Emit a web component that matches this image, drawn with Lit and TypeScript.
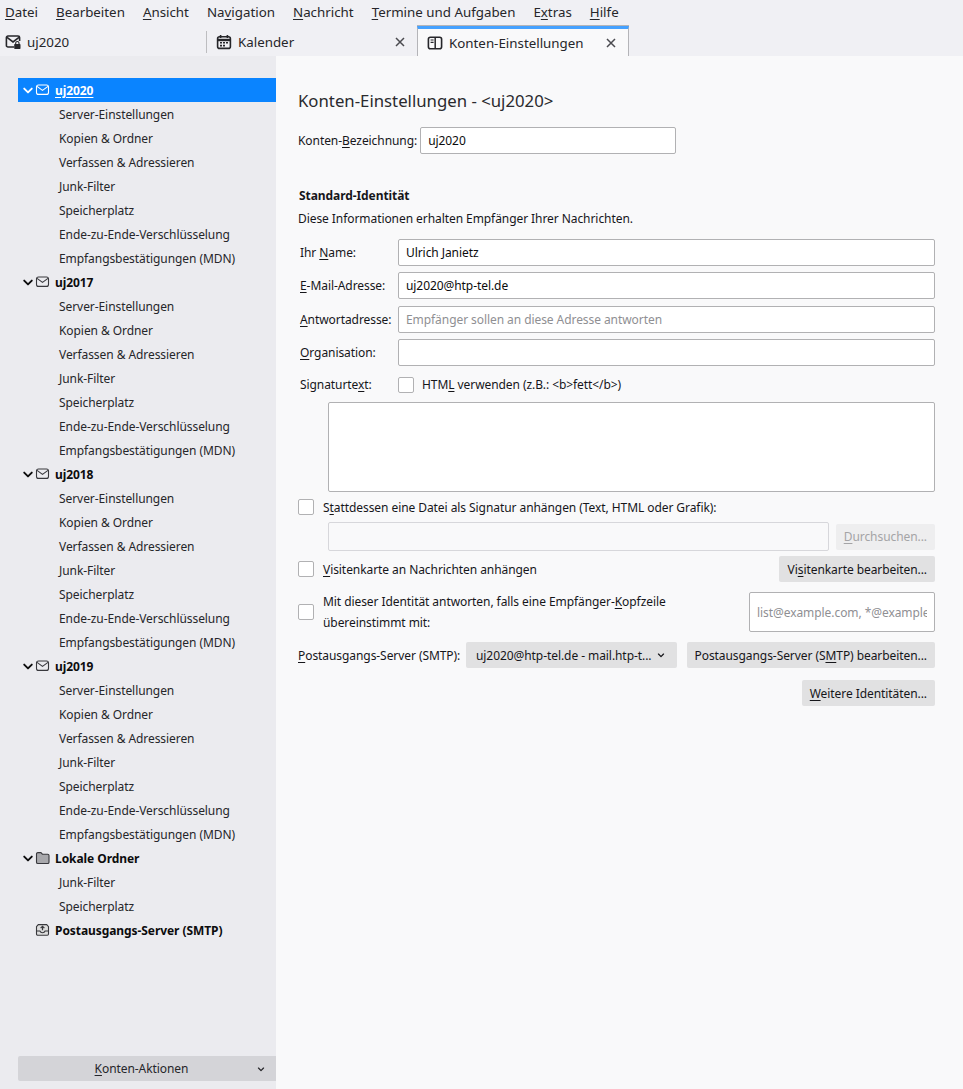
import { LitElement, html, css, svg } from "lit";
import { customElement } from "lit/decorators.js";

const u = (before: string, key: string, after: string) => html`${before}<u>${key}</u>${after}`;

const chevron = svg`<path d="M2.2 4.6 6 8.4l3.8-3.8" fill="none" stroke="currentColor" stroke-width="1.9" stroke-linecap="round" stroke-linejoin="round"/>`;
const mailIcon = svg`<rect x="1.5" y="3" width="12" height="9.4" rx="2" fill="none" stroke="currentColor" stroke-width="1.1"/><path d="M2 4.4 7.5 8.4 13 4.4" fill="none" stroke="currentColor" stroke-width="1.1"/>`;
const folderIcon = svg`<path d="M1.5 4c0-.8.6-1.4 1.4-1.4h3L7.4 4.2h5.3c.8 0 1.3.6 1.3 1.4v6.6c0 .8-.5 1.3-1.3 1.3H2.9c-.8 0-1.4-.5-1.4-1.3z" fill="#a8a8ac" stroke="#38383d" stroke-width="1.1"/>`;
const outboxIcon = svg`<path d="M1.5 4.6 3.3 2.6h8.4l1.8 2v7.4c0 .7-.5 1.2-1.2 1.2H2.7c-.7 0-1.2-.5-1.2-1.2z" fill="#ddd" stroke="#38383d" stroke-width="1.1"/><path d="M1.7 9h3.2c.4 1.1 1.4 1.8 2.6 1.8s2.2-.7 2.6-1.8h3.2" fill="none" stroke="#38383d" stroke-width="1.1"/><path d="M7.5 8.2V4.4M5.6 6.2l1.9-1.9 1.9 1.9" fill="none" stroke="#38383d" stroke-width="1.2"/>`;
const mailLock = svg`<path d="M9 13H3c-.9 0-1.6-.7-1.6-1.6V3.6C1.4 2.7 2.1 2 3 2h10c.9 0 1.6.7 1.6 1.6V7" fill="none" stroke="currentColor" stroke-width="1.6"/><path d="M2 3.4 8 8l6-4.6" fill="none" stroke="currentColor" stroke-width="1.6"/><rect x="9.2" y="10" width="6.3" height="5" rx=".7" fill="currentColor"/><path d="M10.7 10V8.9c0-1.9 3.3-1.9 3.3 0V10" fill="none" stroke="currentColor" stroke-width="1.1"/>`;
const calendarIcon = svg`<rect x="1.6" y="2.8" width="12.8" height="11.6" rx="2" fill="none" stroke="currentColor" stroke-width="1.6"/><path d="M1.8 6h12.4" stroke="currentColor" stroke-width="2.4"/><path d="M4.6 1v3M11.4 1v3" stroke="currentColor" stroke-width="1.6"/><path d="M4 8h2v1.6H4zM7 8h2v1.6H7zM10 8h2v1.6h-2zM4 10.8h2v1.6H4zM7 10.8h2v1.6H7z" fill="currentColor"/>`;
const accountIcon = svg`<rect x="1.4" y="2.2" width="13.2" height="11.6" rx="2" fill="none" stroke="currentColor" stroke-width="1.6"/><path d="M8.2 2.4v11.2" stroke="currentColor" stroke-width="1.5"/><path d="M3.6 5h3M3.6 7.4h3" stroke="currentColor" stroke-width="1.1"/>`;
const closeIcon = svg`<path d="M2 2l8 8M10 2l-8 8" stroke="currentColor" stroke-width="1.5" fill="none"/>`;

const fullChildren = [
  "Server-Einstellungen",
  "Kopien & Ordner",
  "Verfassen & Adressieren",
  "Junk-Filter",
  "Speicherplatz",
  "Ende-zu-Ende-Verschlüsselung",
  "Empfangsbestätigungen (MDN)",
];

const tree = [
  { name: "uj2020", icon: mailIcon, open: true, selected: true, children: fullChildren },
  { name: "uj2017", icon: mailIcon, open: true, children: fullChildren },
  { name: "uj2018", icon: mailIcon, open: true, children: fullChildren },
  { name: "uj2019", icon: mailIcon, open: true, children: fullChildren },
  { name: "Lokale Ordner", icon: folderIcon, open: true, children: ["Junk-Filter", "Speicherplatz"] },
  { name: "Postausgangs-Server (SMTP)", icon: outboxIcon, open: false, children: [] as string[] },
];

@customElement("app-root")
export class AppRoot extends LitElement {
  static styles = css`
    :host {
      display: flex;
      flex-direction: column;
      height: 1089px;
      overflow: hidden;
      font-family: "Noto Sans", sans-serif;
      font-size: 12px;
      letter-spacing: -0.07px;
      color: #0c0c0d;
      background: #f0f0f4;
    }
    svg { display: block; flex: none; }
    u { text-underline-offset: 2px; text-decoration-thickness: 1px; }

    .menubar {
      height: 26px;
      box-sizing: border-box;
      padding: 0 0 2px 5px;
      display: flex;
      align-items: center;
      gap: 18px;
      white-space: nowrap;
      color: #26262a;
      font-size: 13.33px;
      letter-spacing: 0;
    }
    .tabs { height: 30px; display: flex; color: #26262a; font-size: 13.33px; letter-spacing: 0; }
    .tab { display: flex; align-items: center; height: 30px; box-sizing: border-box; padding-top: 2px; }
    .tab1 { width: 206px; padding-left: 5px; gap: 6px; }
    .tab2 { width: 210px; padding-left: 9px; padding-right: 11px; gap: 6px; }
    .tab3 {
      width: 212px;
      padding-left: 9px;
      padding-right: 11px;
      gap: 6px;
      border: 1px solid #b4b4b8;
      border-bottom: none;
      border-top: 3px solid #45a1ff;
      background: #f9f9fa;
      box-shadow: 0 -1px 0 #b4b4b8;
      padding-top: 0;
    }
    .tab .title { flex: 1; }
    .sep { width: 1px; height: 22px; background: #bdbdc0; align-self: center; margin-top: 2px; }
    .close { color: #4a4a4f; }

    .main { flex: 1; display: flex; min-height: 0; }
    .side {
      width: 276px;
      flex: none;
      background: #ebebef;
      box-sizing: border-box;
      padding: 22px 0 8px 18px;
      display: flex;
      flex-direction: column;
    }
    .tree { flex: 1; }
    .row { height: 24px; display: flex; align-items: center; white-space: nowrap; }
    .account { font-weight: 700; padding-left: 4px; }
    .account .tw { width: 12px; margin-right: 1px; }
    .account .ic { margin-right: 4px; color: #38383d; }
    .account.selected { background: #0a84ff; color: #fff; }
    .account.selected .ic { color: #fff; }
    .account.selected .name { text-decoration: underline; text-underline-offset: 2px; }
    .child { padding-left: 41px; color: #26262a; }
    .actions {
      height: 25px;
      background: #d4d4d8;
      border-radius: 2px 0 0 2px;
      display: flex;
      align-items: center;
      padding-right: 11px;
      color: #26262a;
    }
    .actions .lbl { flex: 1; text-align: center; padding-left: 8px; }

    .pane {
      flex: 1;
      background: #f9f9fa;
      box-sizing: border-box;
      padding: 33px 28px 0 22px;
      color: #16161a;
    }
    h1 { font-size: 16.75px; font-weight: 400; margin: 0; line-height: 24px; color: #2a2a2e; letter-spacing: 0; }
    .namerow { display: flex; align-items: center; margin-top: 14px; gap: 3px; }
    input[type="text"], textarea {
      box-sizing: border-box;
      font: inherit;
      letter-spacing: inherit;
      color: #0c0c0d;
      background: #fff;
      border: 1px solid #b1b1b3;
      border-radius: 2px;
      padding: 0 7px;
      margin: 0;
      outline: none;
      display: block;
      resize: none;
    }
    input::placeholder, textarea::placeholder { color: #8f8f93; opacity: 1; }
    .namerow input { width: 256px; height: 27px; }
    .h2 { font-weight: 700; margin: 32px 0 0 1px; line-height: 20px; color: #16161a; }
    .desc { margin-top: 3px; line-height: 20px; }
    .grid {
      display: grid;
      grid-template-columns: 98px 1fr;
      row-gap: 6.33px;
      margin-top: 10px;
      padding-left: 2px;
      align-items: center;
    }
    .grid input { width: 100%; height: 27px; }
    .sigline { display: flex; align-items: center; gap: 8px; margin-top: 4px; height: 16px; }
    .siglabel { margin-top: 4px; }
    .box {
      width: 16px;
      height: 16px;
      box-sizing: border-box;
      background: #fff;
      border: 1px solid #b1b1b3;
      border-radius: 2px;
      flex: none;
    }
    .sig { width: 607px; height: 90px; margin: 9px 0 0 30px; }
    .check { display: flex; align-items: center; gap: 9px; }
    .check1 { margin-top: 7px; height: 16px; }
    .filerow { display: flex; align-items: center; margin: 7px 0 0 30px; gap: 7px; }
    .fileinput {
      width: 501px;
      height: 29px;
      box-sizing: border-box;
      border: 1px solid #d7d7db;
      border-radius: 2px;
      background: #f9f9fa;
    }
    .btn {
      height: 26px;
      background: #e1e1e2;
      border-radius: 2px;
      display: flex;
      align-items: center;
      justify-content: flex-end;
      padding-right: 8px;
      white-space: pre;
      flex: none;
      box-sizing: border-box;
    }
    .btn.disabled { width: 99px; background: #eeeeef; color: #a4a4a6; }
    .cardrow { display: flex; align-items: center; justify-content: space-between; margin-top: 5px; }
    .cardrow .btn { width: 156px; }
    .replyrow { display: flex; align-items: center; justify-content: space-between; margin-top: 10px; height: 40px; }
    .replytext { line-height: 21px; }
    .replyrow input { width: 186px; height: 40px; }
    .smtprow { display: flex; align-items: center; margin-top: 10px; white-space: nowrap; }
    .smtprow label { width: 162px; flex: none; }
    .btn.dropdown { width: 211px; margin-left: 6px; justify-content: flex-start; padding: 0 0 0 10px; gap: 6px; }
    .smtpedit { width: 248px; margin-left: 10px; }
    .morerow { display: flex; justify-content: flex-end; margin-top: 12px; }
    .morerow .btn { width: 133px; }
    .small { width: 8px; height: 8px; }
  `;

  private account(a: (typeof tree)[number]) {
    return html`
      <div class="row account ${a.selected ? "selected" : ""}">
        <span class="tw">${a.open
          ? html`<svg width="12" height="12" viewBox="0 0 12 12">${chevron}</svg>`
          : ""}</span>
        <svg class="ic" width="16" height="16" viewBox="0 0 16 16">${a.icon}</svg>
        <span class="name">${a.name}</span>
      </div>
      ${a.children.map((c) => html`<div class="row child">${c}</div>`)}
    `;
  }

  render() {
    return html`
      <div class="menubar">
        <span>${u("", "D", "atei")}</span>
        <span>${u("", "B", "earbeiten")}</span>
        <span>${u("", "A", "nsicht")}</span>
        <span>${u("Na", "v", "igation")}</span>
        <span>${u("", "N", "achricht")}</span>
        <span>${u("", "T", "ermine und Aufgaben")}</span>
        <span>${u("E", "x", "tras")}</span>
        <span>${u("", "H", "ilfe")}</span>
      </div>
      <div class="tabs">
        <div class="tab tab1">
          <svg width="16" height="16" viewBox="0 0 16 16">${mailLock}</svg>
          <span class="title">uj2020</span>
        </div>
        <div class="sep"></div>
        <div class="tab tab2">
          <svg width="16" height="16" viewBox="0 0 16 16">${calendarIcon}</svg>
          <span class="title">Kalender</span>
          <svg class="close" width="12" height="12" viewBox="0 0 12 12">${closeIcon}</svg>
        </div>
        <div class="tab tab3">
          <svg width="16" height="16" viewBox="0 0 16 16">${accountIcon}</svg>
          <span class="title">Konten-Einstellungen</span>
          <svg class="close" width="12" height="12" viewBox="0 0 12 12">${closeIcon}</svg>
        </div>
      </div>
      <div class="main">
        <div class="side">
          <div class="tree">${tree.map((a) => this.account(a))}</div>
          <div class="actions">
            <span class="lbl">${u("", "K", "onten-Aktionen")}</span>
            <svg class="small" viewBox="0 0 12 12">${chevron}</svg>
          </div>
        </div>
        <div class="pane">
          <h1>Konten-Einstellungen - &lt;uj2020&gt;</h1>
          <div class="namerow">
            <label>${u("Konten-", "B", "ezeichnung:")}</label>
            <input type="text" .value=${"uj2020"} />
          </div>
          <div class="h2">Standard-Identität</div>
          <div class="desc">Diese Informationen erhalten Empfänger Ihrer Nachrichten.</div>
          <div class="grid">
            <label>${u("Ihr ", "N", "ame:")}</label>
            <input type="text" .value=${"Ulrich Janietz"} />
            <label>${u("", "E", "-Mail-Adresse:")}</label>
            <input type="text" .value=${"uj2020@htp-tel.de"} />
            <label>${u("", "A", "ntwortadresse:")}</label>
            <input type="text" placeholder="Empfänger sollen an diese Adresse antworten" />
            <label>${u("", "O", "rganisation:")}</label>
            <input type="text" />
            <label class="siglabel">${u("Signaturte", "x", "t:")}</label>
            <div class="sigline">
              <div class="box"></div>
              <span>${u("HTM", "L", " verwenden (z.B.: <b>fett</b>)")}</span>
            </div>
          </div>
          <textarea class="sig"></textarea>
          <div class="check check1">
            <div class="box"></div>
            <span>${u("S", "t", "attdessen eine Datei als Signatur anhängen (Text, HTML oder Grafik):")}</span>
          </div>
          <div class="filerow">
            <div class="fileinput"></div>
            <div class="btn disabled"><span>${u("", "D", "urchsuchen...")}</span></div>
          </div>
          <div class="cardrow">
            <div class="check">
              <div class="box"></div>
              <span>${u("", "V", "isitenkarte an Nachrichten anhängen")}</span>
            </div>
            <div class="btn"><span>${u("Vi", "s", "itenkarte bearbeiten...")}</span></div>
          </div>
          <div class="replyrow">
            <div class="check">
              <div class="box"></div>
              <span class="replytext">${u("Mit dieser Identität antworten, falls eine Empfänger-", "K", "opfzeile")}<br />übereinstimmt mit:</span>
            </div>
            <input type="text" placeholder="list@example.com, *@example.com" />
          </div>
          <div class="smtprow">
            <label>${u("", "P", "ostausgangs-Server (SMTP):")}</label>
            <div class="btn dropdown">
              <span>uj2020@htp-tel.de - mail.htp-t...</span>
              <svg class="small" viewBox="0 0 12 12">${chevron}</svg>
            </div>
            <div class="btn smtpedit"><span>${u("Postausgangs-Server (S", "M", "TP) bearbeiten...")}</span></div>
          </div>
          <div class="morerow">
            <div class="btn"><span>${u("", "W", "eitere Identitäten...")}</span></div>
          </div>
        </div>
      </div>
    `;
  }
}
